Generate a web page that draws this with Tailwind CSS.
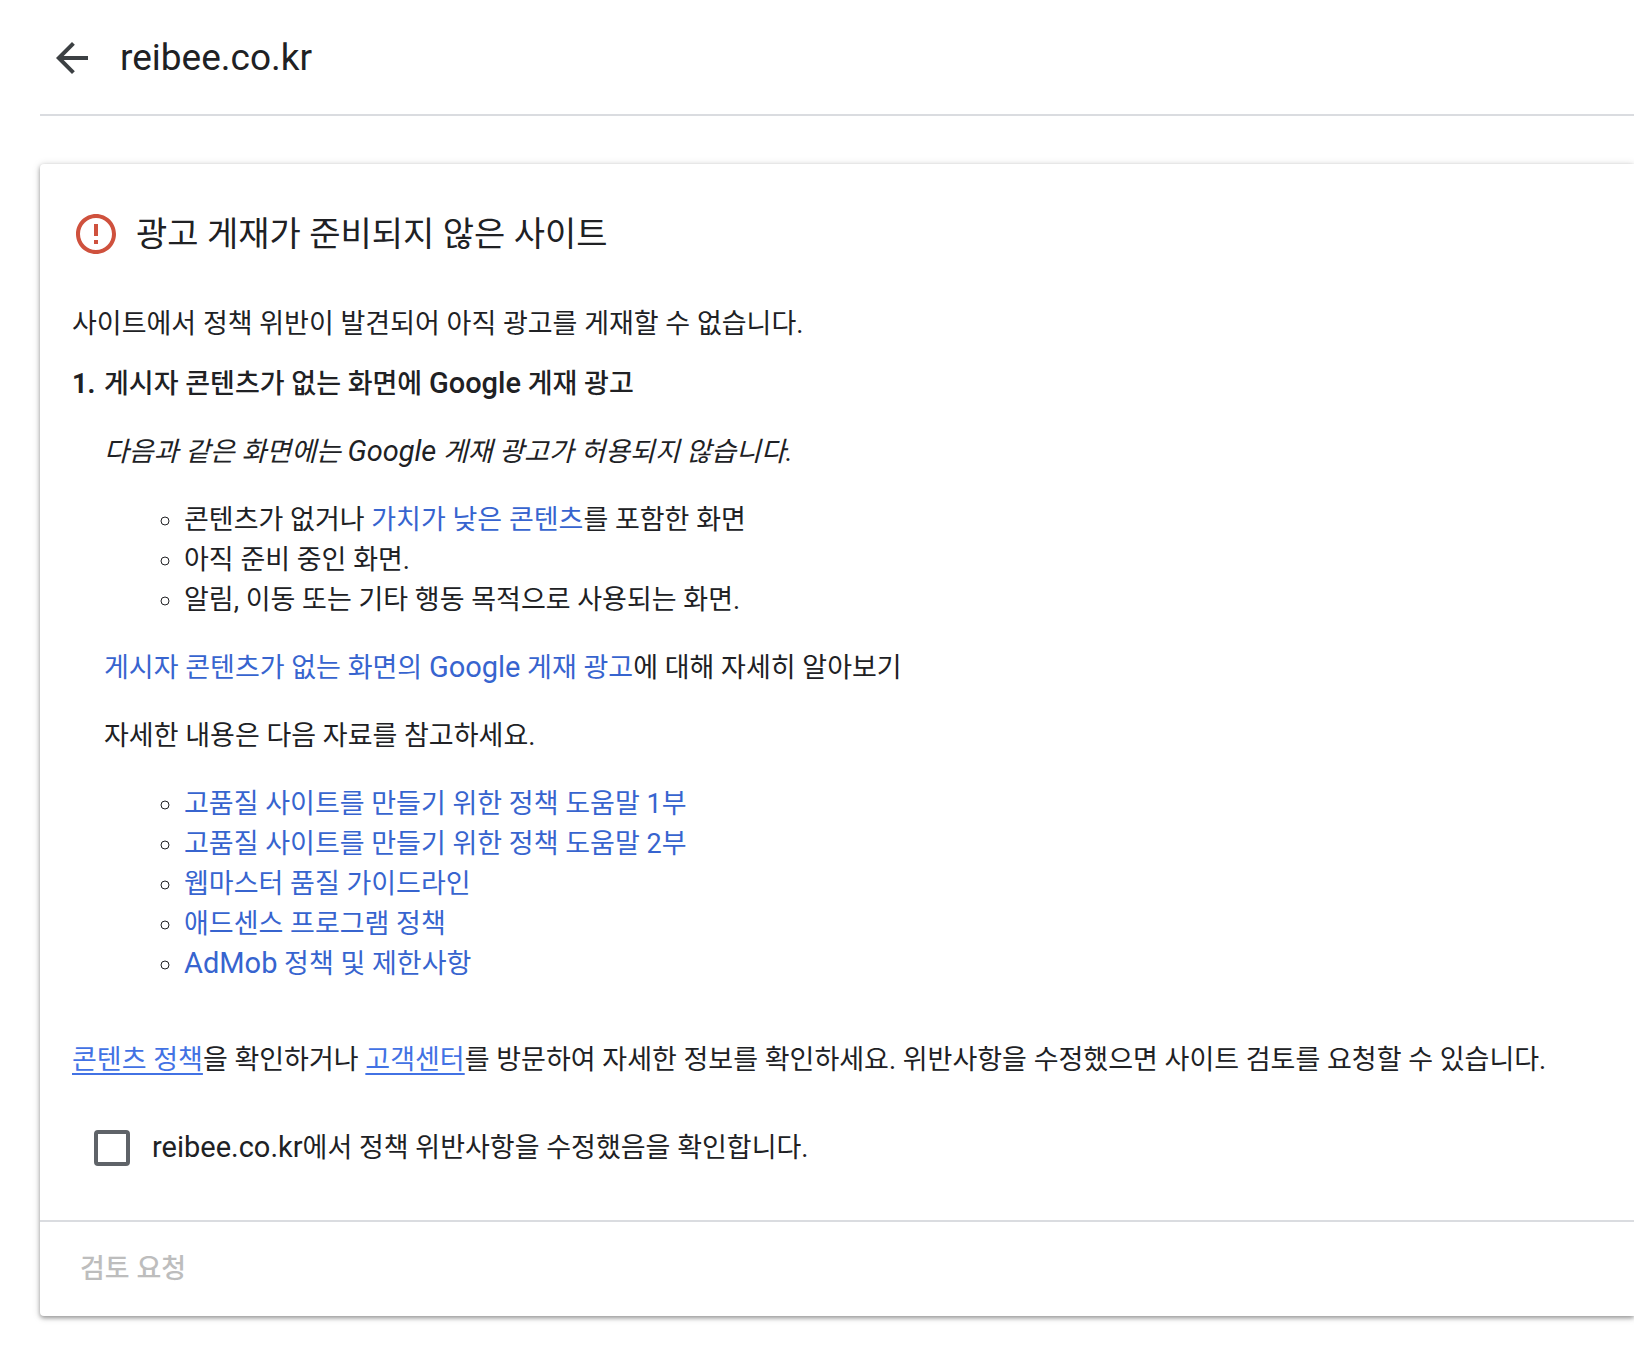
<!DOCTYPE html>
<html lang="ko">
<head>
<meta charset="utf-8">
<meta name="viewport" content="width=device-width, initial-scale=1">
<title>reibee.co.kr</title>
<script src="https://cdn.jsdelivr.net/npm/@tailwindcss/browser@4"></script>
</head>
<body class="min-h-screen overflow-x-hidden bg-white pl-10 font-[Roboto,'Noto_Sans_CJK_KR',sans-serif] text-[27px] leading-10 text-[#202124]">
  <header class="flex items-center gap-6 border-b-2 border-[#dadce0] pt-[34px] pb-8 pl-2">
    <button type="button" aria-label="뒤로" class="size-12 shrink-0 text-[#3c4043]">
      <svg viewBox="0 0 24 24" class="size-12" fill="currentColor" aria-hidden="true"><path d="M20 11H7.83l5.59-5.59L12 4l-8 8 8 8 1.41-1.41L7.83 13H20v-2z"/></svg>
    </button>
    <h1 class="text-[37px]">reibee.co.kr</h1>
  </header>

  <main class="mt-12 rounded-l-sm bg-white shadow-[0_2px_4px_rgba(0,0,0,0.35),0_1px_8px_rgba(0,0,0,0.15)]">
    <div class="px-8 pt-[46px] pb-[52px]">
      <div class="flex items-center gap-4">
        <svg viewBox="0 0 24 24" class="size-12 shrink-0" fill="#cf513d" aria-hidden="true"><path d="M11 15h2v2h-2v-2zm0-8h2v6h-2V7zm.99-5C6.47 2 2 6.48 2 12s4.47 10 9.99 10C17.52 22 22 17.52 22 12S17.52 2 11.99 2zM12 20c-4.42 0-8-3.58-8-8s3.58-8 8-8 8 3.58 8 8-3.58 8-8 8z"/></svg>
        <h2 class="text-[34px]">광고 게재가 준비되지 않은 사이트</h2>
      </div>
      <p class="mt-[46px]">사이트에서 정책 위반이 발견되어 아직 광고를 게재할 수 없습니다.</p>
      <section class="mt-5">
        <h3 class="flex font-medium"><span class="w-8 font-bold">1.</span><span>게시자 콘텐츠가 없는 화면에 <span class="text-[29px] leading-none">Google</span> 게재 광고</span></h3>
        <div class="mt-7 flex flex-col gap-7 pl-8">
          <p class="italic">다음과 같은 화면에는 <span class="text-[29px] leading-none">Google</span> 게재 광고가 허용되지 않습니다.</p>
          <ul class="list-[circle] pl-20">
            <li>콘텐츠가 없거나 <a href="#" class="text-[#3764cf]">가치가 낮은 콘텐츠</a>를 포함한 화면</li>
            <li>아직 준비 중인 화면.</li>
            <li>알림, 이동 또는 기타 행동 목적으로 사용되는 화면.</li>
          </ul>
          <p><a href="#" class="text-[#3764cf]">게시자 콘텐츠가 없는 화면의 <span class="text-[29px] leading-none">Google</span> 게재 광고</a>에 대해 자세히 알아보기</p>
          <p>자세한 내용은 다음 자료를 참고하세요.</p>
          <ul class="list-[circle] pl-20">
            <li><a href="#" class="text-[#3764cf]">고품질 사이트를 만들기 위한 정책 도움말 1부</a></li>
            <li><a href="#" class="text-[#3764cf]">고품질 사이트를 만들기 위한 정책 도움말 2부</a></li>
            <li><a href="#" class="text-[#3764cf]">웹마스터 품질 가이드라인</a></li>
            <li><a href="#" class="text-[#3764cf]">애드센스 프로그램 정책</a></li>
            <li><a href="#" class="text-[#3764cf]"><span class="text-[29px] leading-none">AdMob</span> 정책 및 제한사항</a></li>
          </ul>
        </div>
      </section>
      <p class="mt-14"><a href="#" class="text-[#4272e4] underline decoration-2 underline-offset-4">콘텐츠 정책</a>을 확인하거나 <a href="#" class="text-[#4272e4] underline decoration-2 underline-offset-4">고객센터</a>를 방문하여 자세한 정보를 확인하세요. 위반사항을 수정했으면 사이트 검토를 요청할 수 있습니다.</p>
      <div class="mt-12 flex items-center gap-[22px] pl-[22px]">
        <input id="confirm" type="checkbox" class="size-9 shrink-0 appearance-none rounded border-4 border-[#5f6368] bg-white checked:bg-[#5f6368]">
        <label for="confirm"><span class="text-[29px] leading-none">reibee.co.kr</span>에서 정책 위반사항을 수정했음을 확인합니다.</label>
      </div>
    </div>
    <footer class="border-t-2 border-[#dadce0] px-10 py-[27px]">
      <button type="button" disabled class="block font-medium text-[#bdbdbd]">검토 요청</button>
    </footer>
  </main>
</body>
</html>
